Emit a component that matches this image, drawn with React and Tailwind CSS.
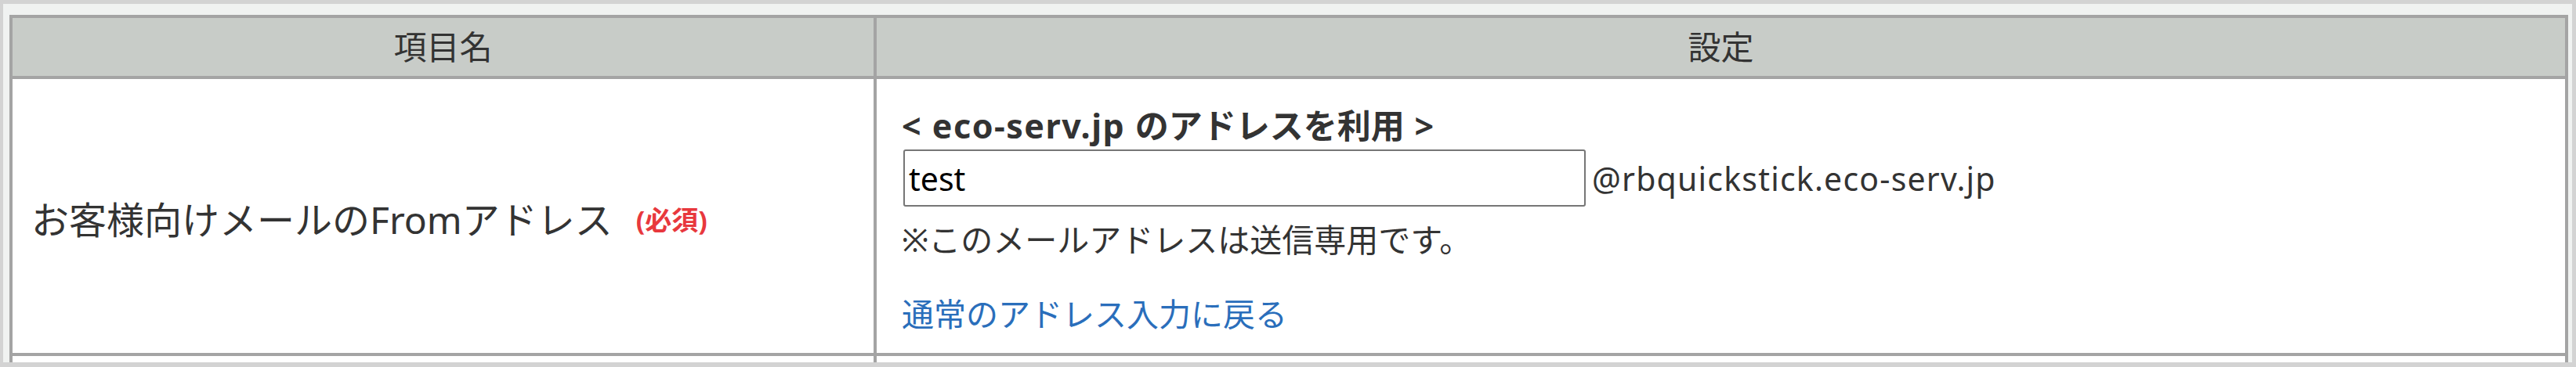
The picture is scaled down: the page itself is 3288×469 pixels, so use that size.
import React from "react";

const font = { fontFamily: "'Noto Sans', 'Noto Sans CJK JP', sans-serif" };

const Row = ({ className, left, right }) => (
  <div className={`flex border-b-4 border-[#a4a4a4] ${className}`}>
    <div className="flex w-[1103px] shrink-0 border-r-4 border-[#a4a4a4]">{left}</div>
    <div className="flex flex-1">{right}</div>
  </div>
);

export default function App() {
  return (
    <div
      className="h-[469px] w-[3288px] overflow-hidden bg-[#d3d3d3] pt-[5px] pl-[4px] pr-[5px] text-[#333333]"
      style={font}
    >
      <div className="h-[458px] overflow-hidden bg-[#f0f2f1] pt-[14px] pl-[8px] pr-[5px]">
        <div className="border-4 border-[#a4a4a4] bg-white">
          {/* header */}
          <Row
            className="h-[78px] bg-[#c8ccc8]"
            left={
              <div className="flex flex-1 items-center justify-center text-[42px] leading-none">
                項目名
              </div>
            }
            right={
              <div className="flex flex-1 items-center justify-center text-[42px] leading-none">
                設定
              </div>
            }
          />

          {/* from address */}
          <Row
            className="h-[354px]"
            left={
              <div className="flex flex-1 items-center pl-[24px] pt-[10px]">
                <span className="text-[48px] leading-none">お客様向けメールのFromアドレス</span>
                <span className="ml-[30px] text-[34px] font-bold leading-none text-[#e8383d]">
                  (必須)
                </span>
              </div>
            }
            right={
              <div className="flex flex-1 flex-col pl-[32px] pt-[36px] text-[41px]">
                <div className="text-[43px] font-bold leading-[48px]">
                  <span className="tracking-[1.5px]">&lt; eco-serv.jp </span>
                  のアドレスを利用
                  <span className="tracking-[1.5px]"> &gt;</span>
                </div>
                <div className="mt-[6px] flex items-baseline leading-none">
                  <input
                    type="text"
                    defaultValue="test"
                    className="ml-[2px] h-[73px] w-[871px] rounded-[3px] border-2 border-[#767676] bg-white px-[5px] text-[41px] text-black outline-none"
                    style={font}
                  />
                  <span className="ml-[8px] tracking-[1.2px]">@rbquickstick.eco-serv.jp</span>
                </div>
                <div className="mt-[18px] leading-[48px]">※このメールアドレスは送信専用です。</div>
                <a href="#" className="mt-[47px] leading-[48px] text-[#2a6ebb]">
                  通常のアドレス入力に戻る
                </a>
              </div>
            }
          />

          {/* next row (cut off) */}
          <Row className="h-[60px]" left={<div />} right={<div />} />
        </div>
      </div>
    </div>
  );
}
